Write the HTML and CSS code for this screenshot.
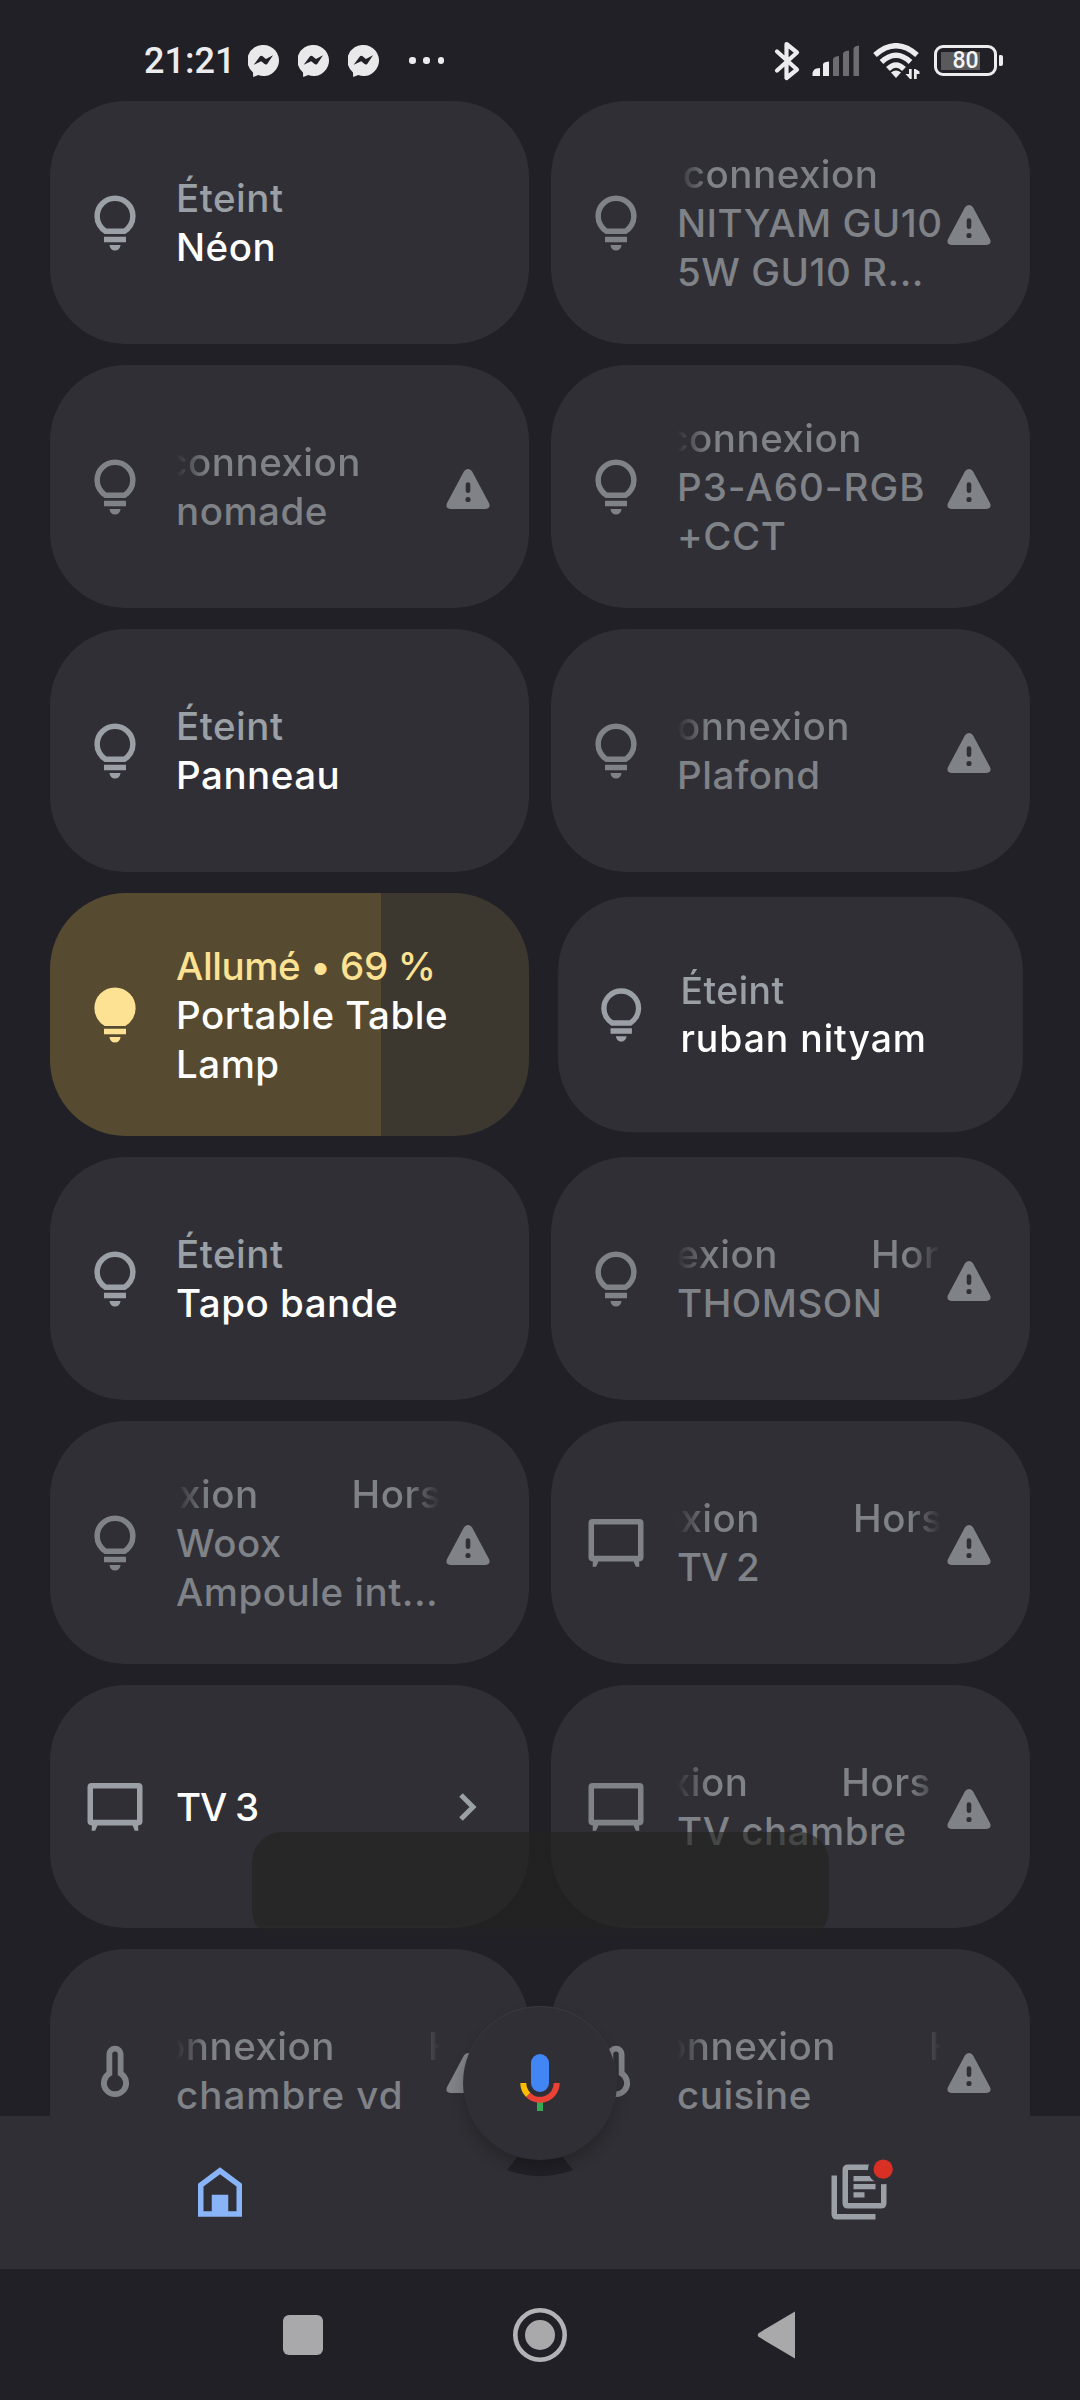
FILE: index.html
```html
<!DOCTYPE html>
<html lang="fr">
<head>
<meta charset="utf-8">
<title>Maison</title>
<link rel="stylesheet" href="styles.css">
</head>
<body>
<svg class="defs" aria-hidden="true">
  <symbol id="bulb" viewBox="0 0 24 24"><path d="M12 22q-.825 0-1.412-.587Q10 20.825 10 20h4q0 .825-.587 1.413Q12.825 22 12 22Zm-4-3v-2h8v2Zm.25-3q-1.725-1.025-2.738-2.75Q4.5 11.525 4.5 9.5q0-3.125 2.188-5.312Q8.875 2 12 2t5.312 2.188Q19.5 6.375 19.5 9.5q0 2.025-1.012 3.75-1.013 1.725-2.738 2.75Zm.6-2h6.3q1.125-.8 1.738-1.975.612-1.175.612-2.525 0-2.3-1.6-3.9T12 4 8.1 5.6 6.5 9.5q0 1.35.613 2.525Q7.725 13.2 8.85 14Z"/></symbol>
  <symbol id="bulb-on" viewBox="0 0 24 24"><path d="M12 22q-.825 0-1.412-.587Q10 20.825 10 20h4q0 .825-.587 1.413Q12.825 22 12 22Zm-4-3v-2h8v2Zm.25-3q-1.725-1.025-2.738-2.75Q4.5 11.525 4.5 9.5q0-3.125 2.188-5.312Q8.875 2 12 2t5.312 2.188Q19.5 6.375 19.5 9.5q0 2.025-1.012 3.75-1.013 1.725-2.738 2.75Z"/></symbol>
  <symbol id="tv" viewBox="0 0 24 24"><path fill-rule="evenodd" d="M3.5 3.300h17Q22 3.300 22 4.800v12.400q0 1.500-1.500 1.500h-.1l.1 1.900h-1.300l-.8-1.900H5.600l-.8 1.900H3.500l.1-1.900h-.1Q2 18.700 2 17.200V4.800q0-1.500 1.500-1.500ZM4 5.300v11.300h16V5.300Z"/></symbol>
  <symbol id="thermo" viewBox="0 0 24 24"><path fill="none" stroke="currentColor" stroke-width="2.100" d="M9.950 12.900V5.900a2.050 2.050 0 0 1 4.100 0v7a4.050 4.050 0 1 1-4.100 0Z"/></symbol>
  <symbol id="warn" viewBox="0 0 44 40"><path fill-rule="evenodd" d="M18 2.300Q22-2.200 26 2.300L43.200 34.500Q44.700 39.800 39.500 40H4.500Q-.7 39.800.8 34.500ZM22 13.200a2.300 2.300 0 0 0-2.300 2.300v6.300a2.300 2.300 0 0 0 4.600 0v-6.300A2.300 2.300 0 0 0 22 13.200Zm0 14.700a2.600 2.600 0 1 0 0 5.200 2.600 2.600 0 0 0 0-5.200Z"/></symbol>
  <symbol id="messenger" viewBox="0 0 31 32"><path fill="#e9e9ec" d="M15.500 0a15.500 15.500 0 1 1-5.200 30.100L5.200 32 5 27.500A15.500 15.500 0 0 1 15.500 0Z"/><path fill="#212026" d="M5.700 19.800 12 11.200q1-1 2.300-.2l3.600 3L25 10.200 19.200 18.900q-1.200 1.200-2.600.2L13.200 16.300Z"/></symbol>
</svg>

<div class="phone">
  <header class="status">
    <div class="status-left">
      <span class="time">21:21</span>
      <div class="notifs">
        <svg class="msg"><use href="#messenger"/></svg>
        <svg class="msg"><use href="#messenger"/></svg>
        <svg class="msg"><use href="#messenger"/></svg>
      </div>
      <span class="dots"><i></i><i></i><i></i></span>
    </div>
    <div class="status-right">
      <svg width="26" height="40" viewBox="0 0 26 40" fill="none" stroke="#ececef" stroke-width="4.200" stroke-linejoin="round" stroke-linecap="round"><path d="M3 10.500 23 28.500 12.500 37V3L23 11.500 3 29.500"/></svg>
      <svg class="signal" width="50" height="32" viewBox="0 0 50 32"><path fill="#ececef" d="M.5 31v-3q1-4 4-4.500l3.500-.5v8ZM11 31V19q.5-1.500 3-2l3-.5V31Z"/><path fill="#6d6c71" d="M21 31V14q.5-2 3-2.500l3-.5v20ZM31 31V8.500q.5-2 3-2.500l3-.5V31ZM41.500 31V3.500q.5-2 3-2.500l2.500-.5V31Z"/></svg>
      <svg class="wifi" width="48" height="36" viewBox="0 0 48 36"><g fill="none" stroke="#ececef" stroke-width="5.400"><path d="M2 12Q23-6.500 44 12"/><path d="M8.500 19Q23 5.500 37.500 19"/><path d="M15 26Q23 18 31 26"/></g><path fill="#ececef" d="M18 29.500Q23 25.500 28 29.500L23 35Z"/><path fill="#ececef" d="M36 26h2.700v10H37l-4.500-5H36ZM41 36h2.700v-5h2.800v-2.500L42.500 26H41Z"/></svg>
      <div class="battery"><span>80</span></div>
    </div>
  </header>

  <main class="home">
    <div class="grid">
      <article class="card">
        <svg class="ico"><use href="#bulb"/></svg>
        <div class="txt"><p class="state">Éteint</p><p class="name">Néon</p></div>
      </article>
      <article class="card off">
        <svg class="ico"><use href="#bulb"/></svg>
        <div class="txt"><p class="ticker" style="--end:201.500px"><span>Hors connexion</span><span>Hors connexion</span></p><p class="name">NITYAM GU10</p><p class="name">5W GU10 R...</p></div>
        <svg class="warn"><use href="#warn"/></svg>
      </article>

      <article class="card off">
        <svg class="ico"><use href="#bulb"/></svg>
        <div class="txt"><p class="ticker" style="--end:185px"><span>Hors connexion</span><span>Hors connexion</span></p><p class="name">nomade</p></div>
        <svg class="warn"><use href="#warn"/></svg>
      </article>
      <article class="card off">
        <svg class="ico"><use href="#bulb"/></svg>
        <div class="txt"><p class="ticker" style="--end:185px"><span>Hors connexion</span><span>Hors connexion</span></p><p class="name wide">P3-A60-RGB</p><p class="name">+CCT</p></div>
        <svg class="warn"><use href="#warn"/></svg>
      </article>

      <article class="card">
        <svg class="ico"><use href="#bulb"/></svg>
        <div class="txt"><p class="state">Éteint</p><p class="name">Panneau</p></div>
      </article>
      <article class="card off">
        <svg class="ico"><use href="#bulb"/></svg>
        <div class="txt"><p class="ticker" style="--end:173px"><span>Hors connexion</span><span>Hors connexion</span></p><p class="name">Plafond</p></div>
        <svg class="warn"><use href="#warn"/></svg>
      </article>

      <article class="card lit" style="--level:69.200%">
        <svg class="ico"><use href="#bulb-on"/></svg>
        <div class="txt"><p class="state">Allumé • 69 %</p><p class="name">Portable Table</p><p class="name">Lamp</p></div>
      </article>
      <article class="card pressed">
        <svg class="ico"><use href="#bulb"/></svg>
        <div class="txt"><p class="state">Éteint</p><p class="name wide">ruban nityam</p></div>
      </article>

      <article class="card">
        <svg class="ico"><use href="#bulb"/></svg>
        <div class="txt"><p class="state">Éteint</p><p class="name">Tapo bande</p></div>
      </article>
      <article class="card off">
        <svg class="ico"><use href="#bulb"/></svg>
        <div class="txt"><p class="ticker" style="--end:101px"><span>Hors connexion</span><span>Hors connexion</span></p><p class="name">THOMSON</p></div>
        <svg class="warn"><use href="#warn"/></svg>
      </article>

      <article class="card off">
        <svg class="ico"><use href="#bulb"/></svg>
        <div class="txt"><p class="ticker" style="--end:82.600px"><span>Hors connexion</span><span>Hors connexion</span></p><p class="name">Woox</p><p class="name">Ampoule int...</p></div>
        <svg class="warn"><use href="#warn"/></svg>
      </article>
      <article class="card off">
        <svg class="ico"><use href="#tv"/></svg>
        <div class="txt"><p class="ticker" style="--end:83px"><span>Hors connexion</span><span>Hors connexion</span></p><p class="name tight">TV 2</p></div>
        <svg class="warn"><use href="#warn"/></svg>
      </article>

      <article class="card">
        <svg class="ico"><use href="#tv"/></svg>
        <div class="txt"><p class="name tight">TV 3</p></div>
        <svg class="chev" viewBox="0 0 44 40"><path d="M15 8 27 20 15 32"/></svg>
      </article>
      <article class="card off">
        <svg class="ico"><use href="#tv"/></svg>
        <div class="txt"><p class="ticker" style="--end:71.300px"><span>Hors connexion</span><span>Hors connexion</span></p><p class="name">TV chambre</p></div>
        <svg class="warn"><use href="#warn"/></svg>
      </article>

      <article class="card off">
        <svg class="ico"><use href="#thermo"/></svg>
        <div class="txt"><p class="ticker" style="--end:159px"><span>Hors connexion</span><span>Hors connexion</span></p><p class="name wide">chambre vd</p></div>
        <svg class="warn"><use href="#warn"/></svg>
      </article>
      <article class="card off">
        <svg class="ico"><use href="#thermo"/></svg>
        <div class="txt"><p class="ticker" style="--end:159px"><span>Hors connexion</span><span>Hors connexion</span></p><p class="name">cuisine</p></div>
        <svg class="warn"><use href="#warn"/></svg>
      </article>
    </div>

    <div class="toast"></div>

    <nav class="tabs">
      <svg class="tab-home" viewBox="0 0 24 24"><path fill="#8ab4f8" fill-rule="evenodd" d="M4 21V9l8-6 8 6v12ZM6 19h3v-6h6v6h3v-9l-6-4.500L6 10Z"/></svg>
      <svg class="tab-feed" viewBox="0 0 24 24"><path fill="#9aa0a6" fill-rule="evenodd" d="M2 6h2v14h14v2H4q-2 0-2-2ZM8 2h12q2 0 2 2v12q0 2-2 2H8q-2 0-2-2V4q0-2 2-2Zm0 2v12h12V4ZM10 6.200h8v1.900h-8ZM10 9.100h8v1.900h-8ZM10 12.100h4v1.900h-4Z"/><circle cx="20.800" cy="3.700" r="5.500" fill="#302f35"/><circle cx="20.800" cy="3.700" r="3.500" fill="#d93025"/></svg>
    </nav>

    <button class="fab" aria-label="Assistant">
      <svg width="44" height="60" viewBox="518 2053 44 60">
        <rect x="531" y="2054" width="18" height="38" rx="9" fill="#4285f4"/>
        <path d="M537 2101h6v10h-6z" fill="#34a853"/>
        <g fill="none" stroke-width="6"><path stroke="#ea4335" d="M528.200 2094.800A16.700 16.700 0 0 0 556.700 2083"/><path stroke="#fbbc04" d="M523.300 2083A16.700 16.700 0 0 0 528.200 2094.800"/></g>
      </svg>
    </button>
  </main>

  <footer class="system">
    <svg width="42" height="42" viewBox="0 0 42 42"><rect x="1" y="1" width="40" height="40" rx="6" fill="#a9a9ab"/></svg>
    <svg width="56" height="56" viewBox="0 0 56 56"><circle cx="28" cy="28" r="24.700" fill="none" stroke="#b3b3b7" stroke-width="4.600"/><circle cx="28" cy="28" r="15" fill="#a9a9ab"/></svg>
    <svg width="42" height="48" viewBox="0 0 42 48"><path fill="#a9a9ab" d="M39 0.500v47L2.500 25.800Q1 24 2.500 22.200Z"/></svg>
  </footer>
</div>
</body>
</html>
```
FILE: styles.css
```css
* { box-sizing: border-box; }

body {
  margin: 0;
  background: #212026;
  font-family: Inter, "Liberation Sans", sans-serif;
}

p { margin: 0; }

.defs { position: absolute; width: 0; height: 0; }

.phone {
  display: flex;
  flex-direction: column;
  width: 1080px;
  height: 2400px;
  overflow: hidden;
  color: #fff;
}

/* Status bar */
.status {
  flex: none;
  display: flex;
  justify-content: space-between;
  align-items: center;
  height: 101px;
  padding: 20px 76px 0 144px;
}
.status-left, .status-right, .notifs, .dots { display: flex; align-items: center; }
.time {
  width: 104px;
  font: 500 36px/44px Roboto, sans-serif;
  color: #ececef;
}
.notifs { gap: 19.200px; }
.msg { width: 31px; height: 32px; }
.dots { gap: 7.700px; margin-left: 30px; }
.dots i { width: 6.400px; height: 6.400px; border-radius: 50%; background: #ececef; }
.status-right { position: relative; left: -1px; }
.signal { margin-left: 12px; }
.wifi { margin-left: 11px; }
.battery {
  position: relative;
  display: flex;
  align-items: center;
  justify-content: center;
  width: 63px;
  height: 31px;
  margin-left: 13px;
  margin-right: 6px;
  border: 3px solid #ececef;
  border-radius: 9px;
  background: linear-gradient(#5a5a5c, #5a5a5c) 4px center / 39px 18px no-repeat;
  font: 500 23px/23px Roboto, sans-serif;
  color: #f4f4f6;
}
.battery::after {
  content: "";
  position: absolute;
  right: -9px;
  top: 7px;
  width: 4px;
  height: 11px;
  border-radius: 1px 2px 2px 1px;
  background: #ececef;
}

/* Device grid */
.home {
  position: relative;
  flex: none;
  height: 2168px;
  overflow: hidden;
}
.grid {
  display: grid;
  grid-template-columns: 479px 479px;
  grid-auto-rows: 243px;
  gap: 21px 22px;
  padding-left: 50px;
}
.card {
  display: flex;
  align-items: center;
  padding-left: 32px;
  border-radius: 76px;
  background: #302f35;
}
.ico {
  flex: none;
  width: 66px;
  height: 66px;
  fill: currentColor;
  color: #9aa0a6;
}
.txt {
  width: 264px;
  margin: 1px 6px 0 28px;
  font-size: 38.500px;
  font-weight: 500;
  line-height: 49px;
  letter-spacing: .5px;
  white-space: nowrap;
}
.state { color: #9aa0a6; }
.wide { letter-spacing: 1px; }
.tight { letter-spacing: -1.200px; }

.off .ico, .off .name, .off .ticker, .off .warn { color: #7f8287; }

.ticker {
  display: flex;
  gap: 93px;
  width: 264px;
  overflow: hidden;
  -webkit-mask-image: linear-gradient(90deg, transparent, #000 32px, #000 232px, transparent);
  mask-image: linear-gradient(90deg, transparent, #000 32px, #000 232px, transparent);
}
.ticker span { flex: none; }
.ticker span:first-child {
  width: 300px;
  margin-left: calc(var(--end) - 300px);
  text-align: right;
}

.warn {
  flex: none;
  width: 44px;
  height: 40px;
  margin-top: 5px;
  fill: currentColor;
}
.chev {
  width: 44px;
  height: 40px;
  fill: none;
  stroke: #9aa0a6;
  stroke-width: 5;
}

.lit { background: linear-gradient(90deg, #564b30 var(--level), #3c382f var(--level)); }
.lit .ico, .lit .state { color: #fde293; }
.lit .state { letter-spacing: -.4px; }
.pressed { transform: scale(.97); }

/* Fading toast above the list */
.toast {
  position: absolute;
  left: 252px;
  top: 1731px;
  width: 577px;
  height: 108px;
  border-radius: 30px;
  background: linear-gradient(rgba(34, 34, 31, .62) 85%, rgba(34, 34, 31, 0));
}

/* Bottom tabs with a notch for the assistant button */
.tabs {
  position: absolute;
  left: 0;
  right: 0;
  bottom: 0;
  display: flex;
  justify-content: space-between;
  align-items: center;
  height: 153px;
  padding: 0 188px 2px 186.500px;
  background: #302f35;
  -webkit-mask-image: radial-gradient(circle at 540px -33.500px, transparent 93px, #000 94px);
  mask-image: radial-gradient(circle at 540px -33.500px, transparent 93px, #000 94px);
}
.tabs svg { width: 66px; height: 66px; overflow: visible; }

.fab {
  position: absolute;
  left: 463px;
  top: 1905px;
  display: flex;
  align-items: center;
  justify-content: center;
  width: 154px;
  height: 154px;
  padding: 0;
  border: 0;
  border-radius: 50%;
  background: #302f35;
  box-shadow: inset 0 1px 1px rgba(255, 255, 255, .06), 0 8px 14px rgba(0, 0, 0, .2);
}

/* System navigation */
.system {
  flex: 1;
  display: flex;
  justify-content: center;
  align-items: center;
  gap: 188px;
}
```
